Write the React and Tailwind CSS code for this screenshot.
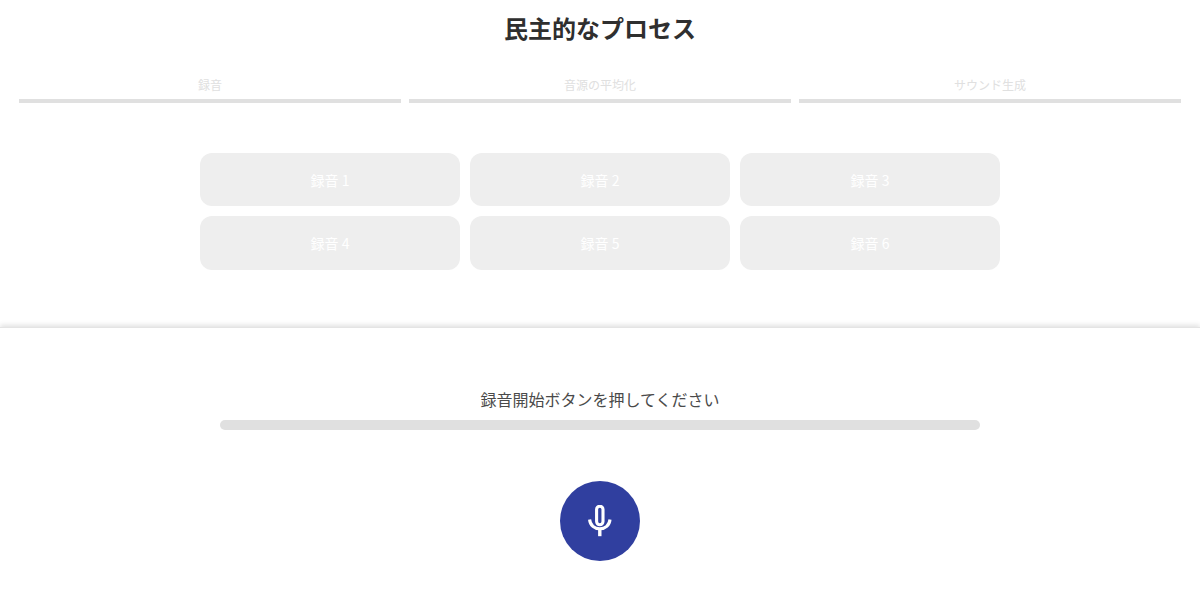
import React from 'react';

const steps = ['録音', '音源の平均化', 'サウンド生成'];
const recordings = [1, 2, 3, 4, 5, 6];

const MicIcon = () => (
  <svg width="28" height="32" viewBox="0 0 28 32" fill="none" stroke="#fff" strokeWidth="3.1">
    <rect x="10.6" y="1.2" width="6.4" height="18.6" rx="3.2" />
    <path d="M3.6 14.5 C4.1 20.2 8.5 23.8 13.8 23.8 C19.1 23.8 23.5 20.2 24 14.5" />
    <path d="M13.8 23.8 V31.2" strokeWidth="3.4" />
  </svg>
);

export default function App() {
  return (
    <div className="w-[1200px] h-[600px] overflow-hidden bg-white font-['Noto_Sans_CJK_JP','Noto_Sans',sans-serif]">
      <div className="h-[327px] flex flex-col items-center">
        <h1 className="mt-[8px] h-[40px] leading-[40px] text-[24px] font-bold text-[#2f2f2f]">民主的なプロセス</h1>
        <div className="mt-[27px] w-full px-[19px] flex gap-[8px]">
          {steps.map((s) => (
            <div key={s} className="flex-1 flex flex-col items-center">
              <span className="h-[20px] leading-[20px] text-[12px] text-[#e0e0e0]">{s}</span>
              <div className="w-full h-[4px] mt-[4px] bg-[#e0e0e0]" />
            </div>
          ))}
        </div>
        <div className="mt-[50px] w-[800px] grid grid-cols-3 gap-[10px]">
          {recordings.map((n) => (
            <div key={n} className="h-[53.33px] pt-[1px] rounded-[12px] bg-[#eeeeee] flex items-center justify-center text-[14px] text-white">
              録音 {n}
            </div>
          ))}
        </div>
      </div>
      <div className="relative h-[273px] flex flex-col items-center border-t border-[#e4e4e4] shadow-[0_-2px_5px_rgba(0,0,0,0.12)]">
        <p className="mt-[59px] h-[24px] leading-[24px] text-[16px] text-[#4a4a4a]">録音開始ボタンを押してください</p>
        <div className="mt-[9px] w-[760px] h-[10px] rounded-full bg-[#e0e0e0]" />
        <button className="mt-[51px] w-[80px] h-[79.5px] rounded-full bg-[#303f9f] flex items-center justify-center">
          <MicIcon />
        </button>
      </div>
    </div>
  );
}
